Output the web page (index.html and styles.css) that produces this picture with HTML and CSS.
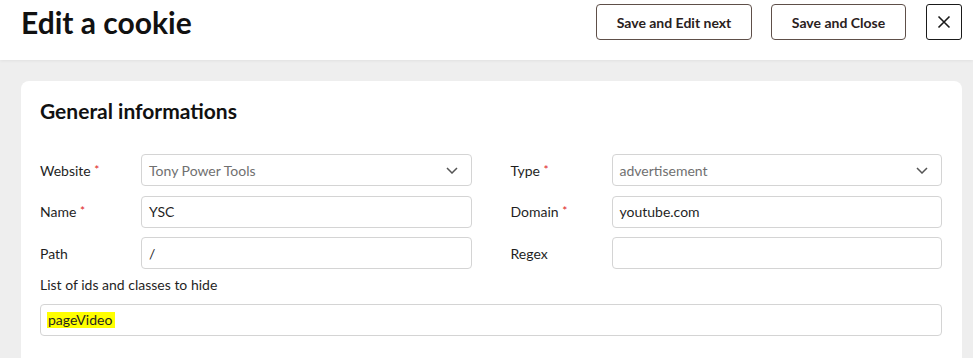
FILE: index.html
```html
<!DOCTYPE html>
<html>
  <head>
    <link rel="stylesheet" href="styles.css">
  </head>
  <body>
    <div class="header">
      <h1 class="title">Edit a cookie</h1>
      <div class="actions">
        <button class="btn btn-next">Save and Edit next</button>
        <button class="btn btn-close">Save and Close</button>
        <button class="btn-x" aria-label="Close">
          <svg width="14" height="14" viewBox="0 0 14 14">
            <path d="M1.5 1.5 L12.5 12.5 M12.5 1.5 L1.5 12.5" stroke="#1a1a1a" stroke-width="1.6" fill="none"/>
          </svg>
        </button>
      </div>
    </div>

    <div class="content">
      <div class="card">
        <h2 class="card-title">General informations</h2>

        <div class="fields">
          <div class="field">
            <label>Website <span class="req">*</span></label>
            <div class="input select">
              <span class="placeholder">Tony Power Tools</span>
              <svg width="12" height="7" viewBox="0 0 12 7"><path d="M1 1 L6 6 L11 1" stroke="#555" stroke-width="1.5" fill="none"/></svg>
            </div>
          </div>
          <div class="field">
            <label>Type <span class="req">*</span></label>
            <div class="input select">
              <span class="placeholder">advertisement</span>
              <svg width="12" height="7" viewBox="0 0 12 7"><path d="M1 1 L6 6 L11 1" stroke="#555" stroke-width="1.5" fill="none"/></svg>
            </div>
          </div>
          <div class="field">
            <label>Name <span class="req">*</span></label>
            <div class="input">YSC</div>
          </div>
          <div class="field">
            <label>Domain <span class="req">*</span></label>
            <div class="input">youtube.com</div>
          </div>
          <div class="field">
            <label>Path</label>
            <div class="input">/</div>
          </div>
          <div class="field">
            <label>Regex</label>
            <div class="input"></div>
          </div>
        </div>

        <div class="block-label">List of ids and classes to hide</div>
        <div class="input wide"><span class="mark">pageVideo</span></div>
      </div>
    </div>
  </body>
</html>
```

FILE: styles.css
```css
html,
body {
  margin: 0;
  padding: 0;
  height: 100%;
  overflow: hidden;
}

body {
  background-color: #eeeeee;
  font-family: Lato, "Open Sans", sans-serif;
  color: #1f1f1f;
}

.header {
  height: 60px;
  background-color: #fff;
  display: flex;
  justify-content: space-between;
  align-items: flex-start;
  padding: 4px 11px 0 21px;
  box-sizing: border-box;
  box-shadow: 0 1px 3px rgba(0, 0, 0, 0.06);
  position: relative;
}

.title {
  margin: 0;
  font-size: 30px;
  line-height: 36px;
  font-weight: 700;
  color: #111;
}

.actions {
  display: flex;
  align-items: center;
}

.btn {
  height: 36px;
  background-color: #fff;
  border: 1px solid #5e4f49;
  border-radius: 4px;
  font-family: Lato, sans-serif;
  font-size: 14px;
  font-weight: 700;
  color: #2a211d;
  padding: 0;
  margin-right: 19px;
  cursor: pointer;
}

.btn-next {
  width: 156px;
}

.btn-close {
  width: 135px;
  margin-right: 20px;
}

.btn-x {
  width: 36px;
  height: 36px;
  background-color: #fff;
  border: 1px solid #1a1a1a;
  border-radius: 3px;
  padding: 0;
  display: flex;
  align-items: center;
  justify-content: center;
  cursor: pointer;
}

.content {
  padding: 21px 11px 0 21px;
}

.card {
  background-color: #fff;
  border-radius: 8px;
  padding: 16px 20px 30px 19px;
}

.card-title {
  margin: 0 0 29px 0;
  font-size: 21px;
  line-height: 28px;
  font-weight: 700;
  color: #111;
}

.fields {
  display: grid;
  grid-template-columns: 1fr 1fr;
  column-gap: 39px;
  row-gap: 9.5px;
}

.field {
  display: grid;
  grid-template-columns: 101px 1fr;
  align-items: center;
}

.field label {
  font-size: 14px;
}

.req {
  color: #e02424;
  font-size: 12px;
  vertical-align: 2px;
}

.input {
  height: 32px;
  box-sizing: border-box;
  border: 1px solid #d4d4d4;
  border-radius: 4px;
  padding: 0 13px 0 7px;
  font-size: 14px;
  color: #1f1f1f;
  display: flex;
  align-items: center;
}

.select {
  justify-content: space-between;
}

.placeholder {
  color: #707070;
}

.block-label {
  font-size: 14px;
  line-height: 20px;
  margin: 6px 0 9px 0;
}

.mark {
  background-color: #ffff00;
  padding: 0 3px 0 1px;
  margin-left: -1px;
  line-height: 16px;
}
```
